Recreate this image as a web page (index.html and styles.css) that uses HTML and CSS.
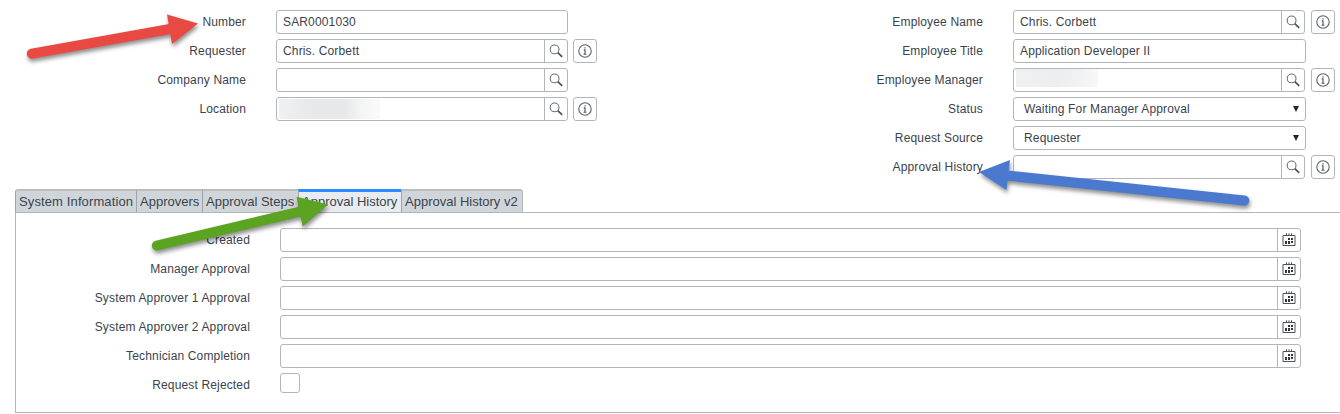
FILE: index.html
```html
<!DOCTYPE html>
<html>
<head>
    <meta charset="utf-8" />
    <title>Access Request</title>
    <link rel="stylesheet" href="styles.css">
</head>
<body>
    <svg class="iconos">
        <symbol id="lupa" viewBox="0 0 14 14">
            <circle cx="5.6" cy="5.4" r="4.4" fill="none" stroke="#6b7278" stroke-width="1.1" />
            <path d="M8.8 8.7 L13.2 12.8" fill="none" stroke="#4a5157" stroke-width="1.7" />
        </symbol>
        <symbol id="info" viewBox="0 0 14 14">
            <circle cx="7" cy="7" r="6.2" fill="none" stroke="#5b6268" stroke-width="1.1" />
            <path d="M7 3.2v1.4M5.8 5.9h1.2v4.3M5.6 10.3h2.8" fill="none" stroke="#4a5157" stroke-width="1.1" />
        </symbol>
        <symbol id="calendario" viewBox="0 0 14 14">
            <path d="M1 2.5h12v10H1z" fill="none" stroke="#4b5258" stroke-width="1" />
            <path d="M4.5 0.3v2.2M7 0.3v2.2M9.5 0.3v2.2" fill="none" stroke="#4b5258" stroke-width="1" />
            <path d="M6 5h2v2h-2zM9 5h2v2h-2zM3 8h2v3h-2zM6 8h2v3h-2zM9 8h2v2h-2z" fill="#2f363c" />
        </symbol>
    </svg>

    <form name="form1">
        <div class="cabecera">
            <div class="columna izquierda">
                <div class="fila"><label>Number</label><div class="campo"><input type="text" value="SAR0001030" /></div></div>
                <div class="fila"><label>Requester</label><div class="campo"><input type="text" value="Chris. Corbett" /><span class="boton"><svg><use href="#lupa" /></svg></span></div><span class="info"><svg><use href="#info" /></svg></span></div>
                <div class="fila"><label>Company Name</label><div class="campo"><input type="text" /><span class="boton"><svg><use href="#lupa" /></svg></span></div></div>
                <div class="fila"><label>Location</label><div class="campo"><span class="oculto ubicacion"></span><span class="boton"><svg><use href="#lupa" /></svg></span></div><span class="info"><svg><use href="#info" /></svg></span></div>
            </div>
            <div class="columna derecha">
                <div class="fila"><label>Employee Name</label><div class="campo"><input type="text" value="Chris. Corbett" /><span class="boton"><svg><use href="#lupa" /></svg></span></div><span class="info"><svg><use href="#info" /></svg></span></div>
                <div class="fila"><label>Employee Title</label><div class="campo ancho"><input type="text" value="Application Developer II" /></div></div>
                <div class="fila"><label>Employee Manager</label><div class="campo"><span class="oculto gerente"></span><span class="boton"><svg><use href="#lupa" /></svg></span></div><span class="info"><svg><use href="#info" /></svg></span></div>
                <div class="fila"><label>Status</label><div class="campo ancho lista"><span>Waiting For Manager Approval</span><i class="flecha"></i></div></div>
                <div class="fila"><label>Request Source</label><div class="campo ancho lista"><span>Requester</span><i class="flecha"></i></div></div>
                <div class="fila"><label>Approval History</label><div class="campo"><input type="text" /><span class="boton"><svg><use href="#lupa" /></svg></span></div><span class="info"><svg><use href="#info" /></svg></span></div>
            </div>
        </div>

        <div class="solapas">
            <a class="solapa s1"><span>System Information</span></a>
            <a class="solapa s2"><span>Approvers</span></a>
            <a class="solapa s3"><span>Approval Steps</span></a>
            <a class="solapa s4 activa"><span>Approval History</span></a>
            <a class="solapa s5"><span>Approval History v2</span></a>
        </div>

        <div class="panel">
            <div class="fila"><label>Created</label><div class="campo"><input type="text" /><span class="boton"><svg><use href="#calendario" /></svg></span></div></div>
            <div class="fila"><label>Manager Approval</label><div class="campo"><input type="text" /><span class="boton"><svg><use href="#calendario" /></svg></span></div></div>
            <div class="fila"><label>System Approver 1 Approval</label><div class="campo"><input type="text" /><span class="boton"><svg><use href="#calendario" /></svg></span></div></div>
            <div class="fila"><label>System Approver 2 Approval</label><div class="campo"><input type="text" /><span class="boton"><svg><use href="#calendario" /></svg></span></div></div>
            <div class="fila"><label>Technician Completion</label><div class="campo"><input type="text" /><span class="boton"><svg><use href="#calendario" /></svg></span></div></div>
            <div class="fila"><label>Request Rejected</label><input type="checkbox" /></div>
        </div>
    </form>

    <!-- flechas sobre el formulario -->
    <svg class="flechas" viewBox="0 0 1340 414">
        <g class="roja"><path d="M31.8 53.7 L170 29" /><polygon points="167,14.5 198,23.5 172,44" /></g>
        <g class="verde"><path d="M156.8 245.5 L301 211.3" /><polygon points="296.5,196.7 328,204.5 302.7,226.5" /></g>
        <g class="azul"><path d="M1244.3 200.5 L1007 175.5" /><polygon points="1010,160 979,172 1006.5,190" /></g>
    </svg>
</body>
</html>
```

FILE: styles.css
```css
* {
    box-sizing: border-box;
}
body {
    margin: 0;
    width: 1340px;
    height: 414px;
    overflow: hidden;
    position: relative;
    background-color: #ffffff;
    font-family: "Liberation Sans", Arial, sans-serif;
    font-size: 12px;
    letter-spacing: 0.15px;
    color: #3a434d;
}
.iconos {
    display: none;
}
.cabecera {
    display: flex;
    height: 189px;
    padding-top: 10px;
}
.columna {
    display: flex;
    flex-direction: column;
    gap: 5px;
}
.izquierda {
    width: 737px;
}
.fila {
    display: flex;
    height: 24px;
}
label {
    width: 246px;
    margin-right: 30px;
    line-height: 24px;
    text-align: right;
    white-space: nowrap;
}
.campo {
    display: flex;
    width: 292px;
    height: 24px;
    border: 1px solid #b3b6b9;
    border-radius: 3px;
    overflow: hidden;
}
.ancho {
    width: 293px;
}
input[type=text] {
    flex: 1;
    min-width: 0;
    padding: 0 6px;
    border: none;
    outline: none;
    background: none;
    font: inherit;
    letter-spacing: inherit;
    color: inherit;
}
.boton {
    display: flex;
    width: 23px;
    border-left: 1px solid #b3b6b9;
    align-items: center;
    justify-content: center;
}
.boton svg, .info svg {
    width: 14px;
    height: 14px;
}
.info {
    display: flex;
    width: 24px;
    height: 24px;
    margin-left: 5px;
    border: 1px solid #b3b6b9;
    border-radius: 3px;
    align-items: center;
    justify-content: center;
}
.derecha .info {
    margin-left: 6px;
}
.oculto {
    flex: 1;
    background-repeat: no-repeat;
}
.ubicacion {
    background-image: linear-gradient(to right, #f0f1f2, #e6e8ea 35%, #e6e8ea 65%, #f4f5f5 82%, #fafafa);
    background-position: 2px 1px;
    background-size: 101px 20px;
}
.gerente {
    background-image: linear-gradient(to right, #eff0f1, #eceeef 50%, #f0f1f2 75%, #f8f8f8);
    background-position: 2px 0;
    background-size: 82px 18px;
}
.lista {
    align-items: center;
    justify-content: space-between;
    padding: 0 6px 0 10px;
}
.flecha {
    border-left: 3px solid transparent;
    border-right: 3px solid transparent;
    border-top: 6px solid #22282d;
}
.solapas {
    display: flex;
    height: 23px;
    padding-left: 15px;
}
.solapa {
    height: 23px;
    padding-left: 3px;
    border-top: 2px solid #b9bdc0;
    border-left: 1px solid #9fa4a8;
    background-color: #d0d5da;
    font-size: 13px;
    line-height: 22px;
    letter-spacing: 0;
    white-space: nowrap;
}
.s1 {
    width: 121px;
    border-top-left-radius: 3px;
    letter-spacing: 0.12px;
}
.s2 {
    width: 66px;
}
.s3 {
    width: 96px;
}
.s4 {
    width: 103px;
}
.s5 {
    width: 122px;
    border-right: 1px solid #b3b6b9;
    border-top-right-radius: 3px;
}
.activa {
    border-top: 3px solid #278efc;
    background-color: #e9ecef;
    line-height: 20px;
}
.panel {
    display: flex;
    flex-direction: column;
    gap: 5px;
    height: 201px;
    margin-left: 15px;
    padding-top: 15px;
    border: 1px solid #b3b6b9;
    border-right: none;
}
.panel label {
    width: 234px;
}
.panel .campo {
    width: 1021px;
}
input[type=checkbox] {
    appearance: none;
    width: 20px;
    height: 20px;
    margin: 0;
    border: 1px solid #b3b6b9;
    border-radius: 3px;
}
.flechas {
    position: absolute;
    left: 0;
    top: 0;
    width: 1340px;
    height: 414px;
}
.flechas g {
    filter: drop-shadow(1px 3px 2px rgba(0, 0, 0, 0.45));
}
.flechas path {
    stroke-width: 10;
    stroke-linecap: round;
}
.roja {
    fill: #e84a43;
    stroke: #e84a43;
}
.verde {
    fill: #5ba422;
    stroke: #5ba422;
}
.azul {
    fill: #4b79cf;
    stroke: #4b79cf;
}
.flechas polygon {
    stroke: none;
}
```
